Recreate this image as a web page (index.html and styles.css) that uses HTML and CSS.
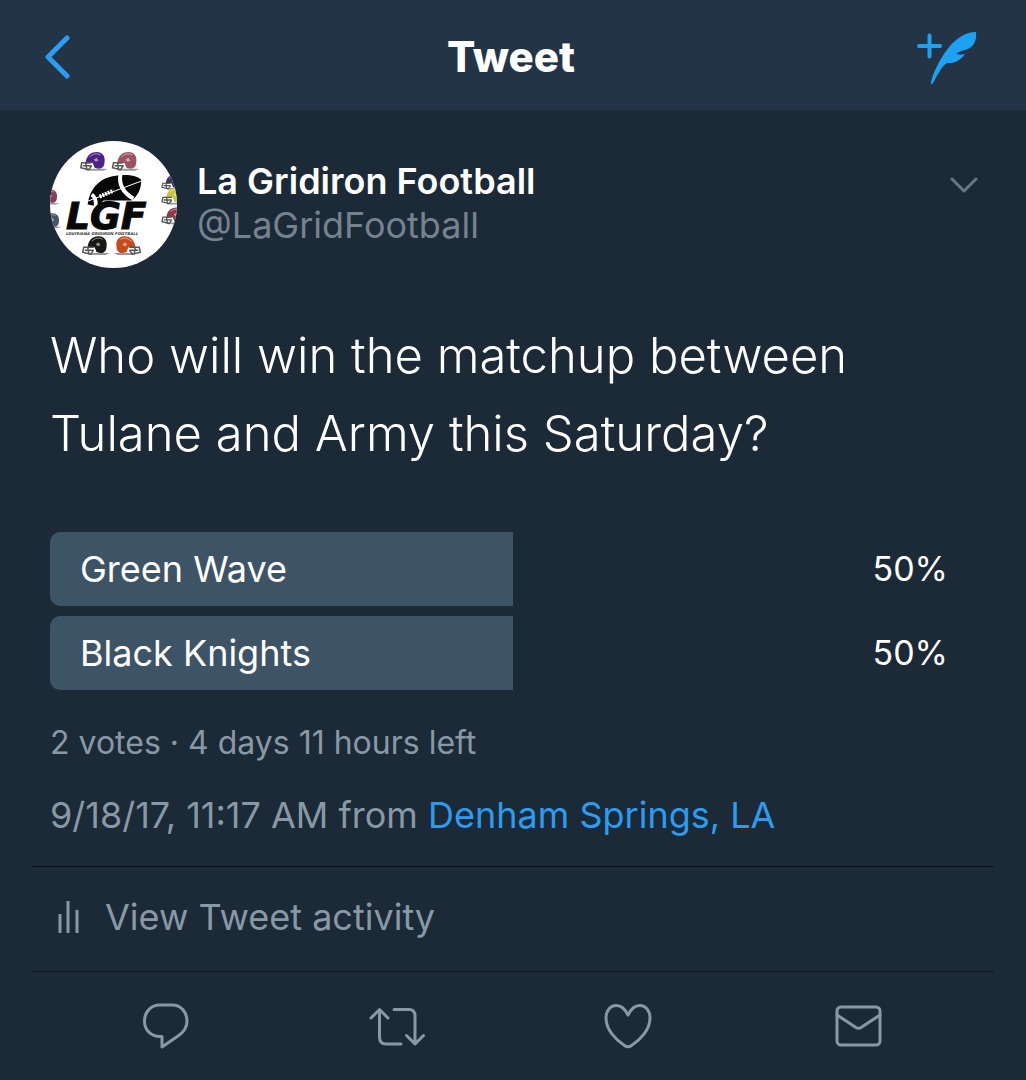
FILE: index.html
```html
<!DOCTYPE html>
<html lang="en">
    <head>
        <title>Tweet</title>
        <meta charset="UTF-8">
        <meta name="viewport" content="width=device-width, initial-scale=1">
        <link rel="stylesheet" href="styles.css">
    </head>
    <body>
        <header class="topbar">
            <button type="button" class="icon-button" aria-label="Back">
                <svg class="icon" width="28" height="44" viewBox="0 0 28 44">
                    <path class="back-arrow" d="M23 3L4 22L23 41"/>
                </svg>
            </button>
            <h1 class="title">Tweet</h1>
            <button type="button" class="icon-button compose" aria-label="Compose">
                <svg class="icon" width="62" height="56" viewBox="0 0 62 56">
                    <path class="plus" d="M3 17H24M13.500 6.500V27.500"/>
                    <path class="feather" d="M60 3C50 3 41 9 34 17C26 26 18 41 15 53Q14.500 57 17 54C21 47 25 38 31 34C38 35 45 31 49 25Q45 26 41 25Q41 23 49 21C57 19 61 12 60 3Z"/>
                </svg>
            </button>
        </header>

        <main>
            <article class="tweet">
                <div class="author">
                    <svg class="avatar" viewBox="0 0 128 128" role="img" aria-label="La Gridiron Football">
                        <defs>
                            <clipPath id="circle"><circle cx="64" cy="64" r="64"/></clipPath>
                            <g id="helmet">
                                <path d="M5 18H28L24 20H7Z" fill="#555" opacity=".6"/>
                                <path d="M6 11C7 4 12 1 17 1C23 1 26 6 25 11C25 15 23 18 19 18L15 17L13 12L6 13Z"/>
                                <path d="M12 12L2 12L1 17L9 19L12 15M3 15H12M6 12L7 18" fill="none" stroke="#555" stroke-width="1.500"/>
                                <path d="M10 6Q15 1 21 4" fill="none" stroke="#fff" stroke-opacity=".5"/>
                                <path d="M14 9L17 7L19 10L16 11Z" fill="#fff" fill-opacity=".5"/>
                            </g>
                        </defs>
                        <g clip-path="url(#circle)">
                            <rect width="128" height="128" fill="#fff"/>
                            <use href="#helmet" x="30" y="10" fill="#4c2384"/>
                            <use href="#helmet" x="62" y="10" fill="#9c5265"/>
                            <use href="#helmet" x="32" y="95" fill="#191713"/>
                            <use href="#helmet" transform="translate(92 95) scale(-1 1)" fill="#c54b1d"/>
                            <use href="#helmet" transform="translate(112 33) scale(.8)" fill="#40345a"/>
                            <use href="#helmet" transform="translate(112 46) scale(.9)" fill="#c9c63b"/>
                            <use href="#helmet" transform="translate(112 66) scale(.9)" fill="#8e3945"/>
                            <use href="#helmet" transform="translate(-13 48) scale(.8)" fill="#854053"/>
                            <use href="#helmet" transform="translate(-11 72) scale(.8)" fill="#485568"/>
                            <!-- football -->
                            <path d="M38 64C40 48 50 37 66 35C78 33 88 35 92 39C92 49 88 56 82 60H54L48 66Z" fill="#080808"/>
                            <path d="M42 54Q47 57 46 66M71 33C69 45 75 53 84 58" fill="none" stroke="#fff" stroke-width="4"/>
                            <path d="M37 61L93 40" stroke="#fff" stroke-width="1"/>
                            <path d="M50 56L64 50" stroke="#fff" stroke-width="4" stroke-dasharray="2 1"/>
                            <text class="logo-letters" x="16" y="89">LGF</text>
                            <text class="logo-caption" x="16" y="95">LOUISIANA GRIDIRON FOOTBALL</text>
                        </g>
                    </svg>
                    <div class="names">
                        <strong class="name">La Gridiron Football</strong>
                        <span class="handle">@LaGridFootball</span>
                    </div>
                    <button type="button" class="icon-button more" aria-label="More options">
                        <svg class="icon" width="24" height="18" viewBox="2 0 24 18">
                            <path class="line" d="M2 3L14 15L26 3"/>
                        </svg>
                    </button>
                </div>

                <p class="text">Who will win the matchup between Tulane and Army this Saturday?</p>

                <ul class="poll">
                    <li class="option">
                        <span class="fill" style="width: 50%"></span>
                        <span class="choice">Green Wave</span>
                        <span class="percent">50%</span>
                    </li>
                    <li class="option">
                        <span class="fill" style="width: 50%"></span>
                        <span class="choice">Black Knights</span>
                        <span class="percent">50%</span>
                    </li>
                </ul>
                <p class="votes">2 votes · 4 days 11 hours left</p>
                <p class="date">9/18/17, 11:17 AM from <a href="#">Denham Springs, LA</a></p>
            </article>

            <a class="activity" href="#">
                <svg class="icon" width="26" height="36" viewBox="0 0 26 36">
                    <path class="bars" d="M4 15V34M12 2V34M21 11V34"/>
                </svg>
                View Tweet activity
            </a>

            <nav class="actions">
                <button type="button" class="icon-button" aria-label="Reply">
                    <svg class="icon" width="56" height="48" viewBox="0 0 56 48">
                        <path class="line" d="M22 3H34C43 3 49 10 49 19C49 26 46 30 40 34L24 45V34.500H22C13 34.500 6.500 28 6.500 19C6.500 10 13 3 22 3Z"/>
                    </svg>
                </button>
                <button type="button" class="icon-button" aria-label="Retweet">
                    <svg class="icon" width="56" height="48" viewBox="0 0 56 48">
                        <path class="line" d="M2 16L10.500 7.500L19 16M10.500 8V35Q10.500 42 17 42H32M25 7.500H40Q46 7.500 46 14V41M37.500 33.500L46 42L54.500 33.500"/>
                    </svg>
                </button>
                <button type="button" class="icon-button" aria-label="Like">
                    <svg class="icon" width="56" height="48" viewBox="0 0 56 48">
                        <path class="line" d="M28 13C25 7 21 3.500 16.500 3.500C10 3.500 6 9 6 16C6 28 16 38 24.500 43.500Q28 46 31.500 43.500C40 38 50 28 50 16C50 9 46 3.500 39.500 3.500C35 3.500 31 7 28 13Z"/>
                    </svg>
                </button>
                <button type="button" class="icon-button" aria-label="Direct message">
                    <svg class="icon" width="56" height="48" viewBox="0 0 56 48">
                        <rect class="line" x="6" y="5" width="43" height="38" rx="4"/>
                        <path class="line" d="M6 13L25 25.500Q27.500 27 30 25.500L49 13"/>
                    </svg>
                </button>
            </nav>
        </main>
    </body>
</html>
```
FILE: styles.css
```css
* {
    box-sizing: border-box;
}
body {
    margin: 0;
    background-color: #1c2936;
    color: #fff;
    font-family: Inter, "Liberation Sans", sans-serif;
    font-size: 36px;
    line-height: 44px;
}
a {
    color: #2a9df0;
    text-decoration: none;
}
p, ul, h1 {
    margin: 0;
    padding: 0;
}
.icon {
    display: block;
    fill: none;
    stroke-linecap: round;
    stroke-linejoin: round;
}
.icon-button {
    padding: 0;
    border: 0;
    background: none;
    cursor: pointer;
}
.topbar {
    display: grid;
    grid-template-columns: 1fr auto 1fr;
    align-items: center;
    height: 110px;
    padding: 3px 48px 0 44px;
    background-color: #243447;
}
.title {
    font-size: 42px;
    font-weight: 800;
}
.compose {
    justify-self: end;
}
.back-arrow {
    stroke: #2a9df0;
    stroke-width: 5;
}
.plus {
    stroke: #1da1f2;
    stroke-width: 4;
}
.feather {
    fill: #1da1f2;
}
.line {
    stroke: #8899a6;
    stroke-width: 3;
}
.tweet {
    padding: 31px 50px 29px;
}
.author {
    display: flex;
    gap: 20px;
}
.avatar {
    width: 127px;
    height: 127px;
    flex: none;
}
.logo-letters {
    font: italic 700 38px "DejaVu Sans", sans-serif;
    fill: #080808;
    stroke: #080808;
    stroke-width: 1;
}
.logo-caption {
    font: italic 700 4px "DejaVu Sans", sans-serif;
    fill: #333;
}
.names {
    flex: 1;
    padding-top: 18px;
}
.name, .handle {
    display: block;
}
.name {
    font-weight: 600;
}
.handle {
    color: #74838f;
}
.more {
    align-self: flex-start;
    padding-top: 35px;
    opacity: .7;
}
.more .icon {
    overflow: visible;
}
.text {
    margin-top: 49px;
    font-size: 49px;
    font-weight: 350;
    line-height: 78px;
}
.poll {
    display: grid;
    gap: 10px;
    margin-top: 59px;
    list-style: none;
}
.option {
    display: grid;
    grid-template-columns: 1fr auto;
    align-items: center;
    height: 74px;
}
.fill {
    grid-area: 1 / 1 / 2 / 3;
    height: 100%;
    border-radius: 10px 0 0 10px;
    background-color: #3d5466;
}
.choice {
    grid-area: 1 / 1;
    padding-left: 30px;
}
.percent {
    grid-area: 1 / 2;
    padding-right: 28px;
    font-size: 34px;
}
.votes {
    margin-top: 31px;
    color: #8899a6;
    font-size: 32px;
}
.date {
    margin-top: 28px;
    color: #8899a6;
}
.activity {
    display: flex;
    align-items: center;
    gap: 23px;
    height: 106px;
    margin: 0 32px;
    padding: 0 24px 4px;
    border-top: 1px solid #0b141c;
    border-bottom: 1px solid #0b141c;
    color: #8899a6;
}
.bars {
    stroke: #8899a6;
    stroke-width: 3;
    stroke-linecap: butt;
}
.actions {
    display: grid;
    grid-template-columns: repeat(4, 1fr);
    justify-items: center;
    padding: 30px 52px 30px 50px;
}
```
